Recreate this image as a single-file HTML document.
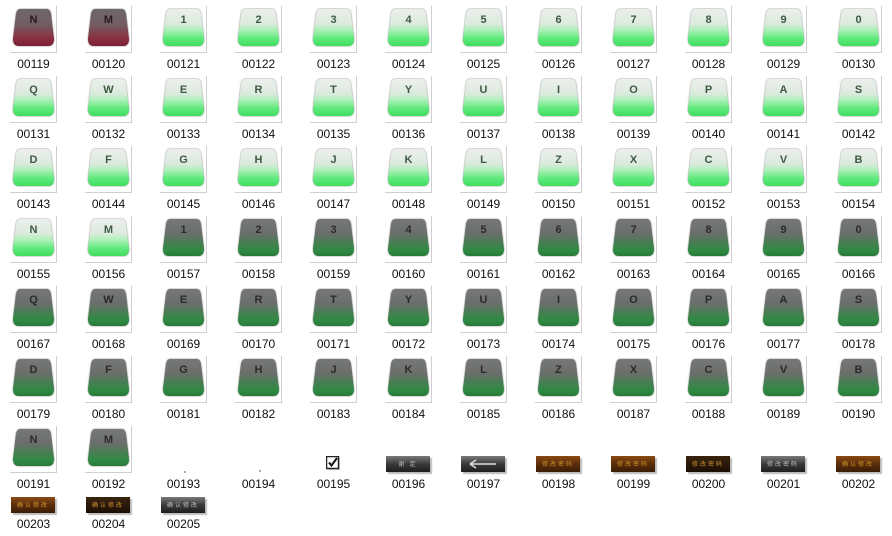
<!DOCTYPE html>
<html><head><meta charset="utf-8"><style>
*{margin:0;padding:0;box-sizing:border-box}
body{width:892px;height:536px;background:#fff;position:relative;overflow:hidden;font-family:"Liberation Sans",sans-serif}
.c{position:absolute;width:75px;height:70px}
.f{position:absolute;left:10px;top:6px;width:47px;height:47px;border-right:1px solid #cfcfcf;border-bottom:1px solid #cfcfcf}
.w{position:absolute;left:3px;top:3px;width:41px;height:37px;filter:drop-shadow(0 0 0.7px rgba(0,0,0,.6))}
.k{position:absolute;left:0;top:0;width:41px;height:37px;clip-path:path('M7 0 H34 Q37 0 38 5 L41 30 Q41 37 35 37 H6 Q0 37 0 30 L3 5 Q4 0 7 0 Z');font:bold 11px "Liberation Sans",sans-serif;text-align:center;padding-top:5px;color:#333}
.g{background:linear-gradient(#ecefec 0%,#dbeadd 40%,#b2f0bc 55%,#62ea7e 78%,#3fdd5e 100%);color:#3f5a44}
.r{background:linear-gradient(#6e6769 0%,#735b61 45%,#8a3042 78%,#7c2033 100%);color:#2a1a1e}
.d{background:linear-gradient(#767876 0%,#6a6e6b 40%,#4c7c56 60%,#2e8a42 85%,#297a39 100%);color:#2a2a2a}
.l{position:absolute;left:0;top:57px;width:67px;text-align:center;font-size:12px;color:#111}
.b{position:absolute;left:11px;width:44px;height:16px;box-shadow:2px 2px 1px #bbb;font:6px "Noto Sans CJK SC",sans-serif;color:#d09030;text-align:center;line-height:16px;letter-spacing:2px;overflow:hidden}
.gr{background:linear-gradient(#7a7a7a,#3a3a3a 50%,#1e1e1e);color:#bbb}
.br{background:linear-gradient(#8a4a14,#5a2e0a 50%,#3a1c06)}
.bk{background:linear-gradient(#3a2410,#1a0e04)}
</style></head><body>
<div class="c" style="left:0;top:0"><div class="f"><div class="w"><div class="k r">N</div></div></div><div class="l">00119</div></div>
<div class="c" style="left:75px;top:0"><div class="f"><div class="w"><div class="k r">M</div></div></div><div class="l">00120</div></div>
<div class="c" style="left:150px;top:0"><div class="f"><div class="w"><div class="k g">1</div></div></div><div class="l">00121</div></div>
<div class="c" style="left:225px;top:0"><div class="f"><div class="w"><div class="k g">2</div></div></div><div class="l">00122</div></div>
<div class="c" style="left:300px;top:0"><div class="f"><div class="w"><div class="k g">3</div></div></div><div class="l">00123</div></div>
<div class="c" style="left:375px;top:0"><div class="f"><div class="w"><div class="k g">4</div></div></div><div class="l">00124</div></div>
<div class="c" style="left:450px;top:0"><div class="f"><div class="w"><div class="k g">5</div></div></div><div class="l">00125</div></div>
<div class="c" style="left:525px;top:0"><div class="f"><div class="w"><div class="k g">6</div></div></div><div class="l">00126</div></div>
<div class="c" style="left:600px;top:0"><div class="f"><div class="w"><div class="k g">7</div></div></div><div class="l">00127</div></div>
<div class="c" style="left:675px;top:0"><div class="f"><div class="w"><div class="k g">8</div></div></div><div class="l">00128</div></div>
<div class="c" style="left:750px;top:0"><div class="f"><div class="w"><div class="k g">9</div></div></div><div class="l">00129</div></div>
<div class="c" style="left:825px;top:0"><div class="f"><div class="w"><div class="k g">0</div></div></div><div class="l">00130</div></div>
<div class="c" style="left:0;top:70px"><div class="f"><div class="w"><div class="k g">Q</div></div></div><div class="l">00131</div></div>
<div class="c" style="left:75px;top:70px"><div class="f"><div class="w"><div class="k g">W</div></div></div><div class="l">00132</div></div>
<div class="c" style="left:150px;top:70px"><div class="f"><div class="w"><div class="k g">E</div></div></div><div class="l">00133</div></div>
<div class="c" style="left:225px;top:70px"><div class="f"><div class="w"><div class="k g">R</div></div></div><div class="l">00134</div></div>
<div class="c" style="left:300px;top:70px"><div class="f"><div class="w"><div class="k g">T</div></div></div><div class="l">00135</div></div>
<div class="c" style="left:375px;top:70px"><div class="f"><div class="w"><div class="k g">Y</div></div></div><div class="l">00136</div></div>
<div class="c" style="left:450px;top:70px"><div class="f"><div class="w"><div class="k g">U</div></div></div><div class="l">00137</div></div>
<div class="c" style="left:525px;top:70px"><div class="f"><div class="w"><div class="k g">I</div></div></div><div class="l">00138</div></div>
<div class="c" style="left:600px;top:70px"><div class="f"><div class="w"><div class="k g">O</div></div></div><div class="l">00139</div></div>
<div class="c" style="left:675px;top:70px"><div class="f"><div class="w"><div class="k g">P</div></div></div><div class="l">00140</div></div>
<div class="c" style="left:750px;top:70px"><div class="f"><div class="w"><div class="k g">A</div></div></div><div class="l">00141</div></div>
<div class="c" style="left:825px;top:70px"><div class="f"><div class="w"><div class="k g">S</div></div></div><div class="l">00142</div></div>
<div class="c" style="left:0;top:140px"><div class="f"><div class="w"><div class="k g">D</div></div></div><div class="l">00143</div></div>
<div class="c" style="left:75px;top:140px"><div class="f"><div class="w"><div class="k g">F</div></div></div><div class="l">00144</div></div>
<div class="c" style="left:150px;top:140px"><div class="f"><div class="w"><div class="k g">G</div></div></div><div class="l">00145</div></div>
<div class="c" style="left:225px;top:140px"><div class="f"><div class="w"><div class="k g">H</div></div></div><div class="l">00146</div></div>
<div class="c" style="left:300px;top:140px"><div class="f"><div class="w"><div class="k g">J</div></div></div><div class="l">00147</div></div>
<div class="c" style="left:375px;top:140px"><div class="f"><div class="w"><div class="k g">K</div></div></div><div class="l">00148</div></div>
<div class="c" style="left:450px;top:140px"><div class="f"><div class="w"><div class="k g">L</div></div></div><div class="l">00149</div></div>
<div class="c" style="left:525px;top:140px"><div class="f"><div class="w"><div class="k g">Z</div></div></div><div class="l">00150</div></div>
<div class="c" style="left:600px;top:140px"><div class="f"><div class="w"><div class="k g">X</div></div></div><div class="l">00151</div></div>
<div class="c" style="left:675px;top:140px"><div class="f"><div class="w"><div class="k g">C</div></div></div><div class="l">00152</div></div>
<div class="c" style="left:750px;top:140px"><div class="f"><div class="w"><div class="k g">V</div></div></div><div class="l">00153</div></div>
<div class="c" style="left:825px;top:140px"><div class="f"><div class="w"><div class="k g">B</div></div></div><div class="l">00154</div></div>
<div class="c" style="left:0;top:210px"><div class="f"><div class="w"><div class="k g">N</div></div></div><div class="l">00155</div></div>
<div class="c" style="left:75px;top:210px"><div class="f"><div class="w"><div class="k g">M</div></div></div><div class="l">00156</div></div>
<div class="c" style="left:150px;top:210px"><div class="f"><div class="w"><div class="k d">1</div></div></div><div class="l">00157</div></div>
<div class="c" style="left:225px;top:210px"><div class="f"><div class="w"><div class="k d">2</div></div></div><div class="l">00158</div></div>
<div class="c" style="left:300px;top:210px"><div class="f"><div class="w"><div class="k d">3</div></div></div><div class="l">00159</div></div>
<div class="c" style="left:375px;top:210px"><div class="f"><div class="w"><div class="k d">4</div></div></div><div class="l">00160</div></div>
<div class="c" style="left:450px;top:210px"><div class="f"><div class="w"><div class="k d">5</div></div></div><div class="l">00161</div></div>
<div class="c" style="left:525px;top:210px"><div class="f"><div class="w"><div class="k d">6</div></div></div><div class="l">00162</div></div>
<div class="c" style="left:600px;top:210px"><div class="f"><div class="w"><div class="k d">7</div></div></div><div class="l">00163</div></div>
<div class="c" style="left:675px;top:210px"><div class="f"><div class="w"><div class="k d">8</div></div></div><div class="l">00164</div></div>
<div class="c" style="left:750px;top:210px"><div class="f"><div class="w"><div class="k d">9</div></div></div><div class="l">00165</div></div>
<div class="c" style="left:825px;top:210px"><div class="f"><div class="w"><div class="k d">0</div></div></div><div class="l">00166</div></div>
<div class="c" style="left:0;top:280px"><div class="f"><div class="w"><div class="k d">Q</div></div></div><div class="l">00167</div></div>
<div class="c" style="left:75px;top:280px"><div class="f"><div class="w"><div class="k d">W</div></div></div><div class="l">00168</div></div>
<div class="c" style="left:150px;top:280px"><div class="f"><div class="w"><div class="k d">E</div></div></div><div class="l">00169</div></div>
<div class="c" style="left:225px;top:280px"><div class="f"><div class="w"><div class="k d">R</div></div></div><div class="l">00170</div></div>
<div class="c" style="left:300px;top:280px"><div class="f"><div class="w"><div class="k d">T</div></div></div><div class="l">00171</div></div>
<div class="c" style="left:375px;top:280px"><div class="f"><div class="w"><div class="k d">Y</div></div></div><div class="l">00172</div></div>
<div class="c" style="left:450px;top:280px"><div class="f"><div class="w"><div class="k d">U</div></div></div><div class="l">00173</div></div>
<div class="c" style="left:525px;top:280px"><div class="f"><div class="w"><div class="k d">I</div></div></div><div class="l">00174</div></div>
<div class="c" style="left:600px;top:280px"><div class="f"><div class="w"><div class="k d">O</div></div></div><div class="l">00175</div></div>
<div class="c" style="left:675px;top:280px"><div class="f"><div class="w"><div class="k d">P</div></div></div><div class="l">00176</div></div>
<div class="c" style="left:750px;top:280px"><div class="f"><div class="w"><div class="k d">A</div></div></div><div class="l">00177</div></div>
<div class="c" style="left:825px;top:280px"><div class="f"><div class="w"><div class="k d">S</div></div></div><div class="l">00178</div></div>
<div class="c" style="left:0;top:350px"><div class="f"><div class="w"><div class="k d">D</div></div></div><div class="l">00179</div></div>
<div class="c" style="left:75px;top:350px"><div class="f"><div class="w"><div class="k d">F</div></div></div><div class="l">00180</div></div>
<div class="c" style="left:150px;top:350px"><div class="f"><div class="w"><div class="k d">G</div></div></div><div class="l">00181</div></div>
<div class="c" style="left:225px;top:350px"><div class="f"><div class="w"><div class="k d">H</div></div></div><div class="l">00182</div></div>
<div class="c" style="left:300px;top:350px"><div class="f"><div class="w"><div class="k d">J</div></div></div><div class="l">00183</div></div>
<div class="c" style="left:375px;top:350px"><div class="f"><div class="w"><div class="k d">K</div></div></div><div class="l">00184</div></div>
<div class="c" style="left:450px;top:350px"><div class="f"><div class="w"><div class="k d">L</div></div></div><div class="l">00185</div></div>
<div class="c" style="left:525px;top:350px"><div class="f"><div class="w"><div class="k d">Z</div></div></div><div class="l">00186</div></div>
<div class="c" style="left:600px;top:350px"><div class="f"><div class="w"><div class="k d">X</div></div></div><div class="l">00187</div></div>
<div class="c" style="left:675px;top:350px"><div class="f"><div class="w"><div class="k d">C</div></div></div><div class="l">00188</div></div>
<div class="c" style="left:750px;top:350px"><div class="f"><div class="w"><div class="k d">V</div></div></div><div class="l">00189</div></div>
<div class="c" style="left:825px;top:350px"><div class="f"><div class="w"><div class="k d">B</div></div></div><div class="l">00190</div></div>
<div class="c" style="left:0;top:420px"><div class="f"><div class="w"><div class="k d">N</div></div></div><div class="l">00191</div></div>
<div class="c" style="left:75px;top:420px"><div class="f"><div class="w"><div class="k d">M</div></div></div><div class="l">00192</div></div>
<div class="c" style="left:150px;top:420px"><div style="position:absolute;left:34px;top:51px;width:2px;height:2px;background:#aaa"></div><div class="l">00193</div></div>
<div class="c" style="left:225px;top:420px"><div style="position:absolute;left:34px;top:50px;width:2px;height:2px;background:#aaa"></div><div class="l">00194</div></div>
<div class="c" style="left:300px;top:420px"><svg style="position:absolute;left:26px;top:36px" width="15" height="15" viewBox="0 0 15 15"><rect x="0.5" y="0.5" width="12" height="12" fill="#fff" stroke="#222" stroke-width="1.5"/><path d="M3 6.5 L5.5 9.5 L11 2" fill="none" stroke="#111" stroke-width="2"/><path d="M2 13.5 H14 M13.5 2 V14" stroke="#aaa"/></svg><div class="l">00195</div></div>
<div class="c" style="left:375px;top:420px"><div class="b gr" style="top:36px">谢 定</div><div class="l">00196</div></div>
<div class="c" style="left:450px;top:420px"><div class="b gr" style="top:36px"><svg width="30" height="10" viewBox="0 0 30 10" style="margin-top:3px"><path d="M2 5 H28 M2 5 L8 1 M2 5 L8 9" stroke="#ddd" stroke-width="1.5" fill="none"/></svg></div><div class="l">00197</div></div>
<div class="c" style="left:525px;top:420px"><div class="b br" style="top:36px">修改密码</div><div class="l">00198</div></div>
<div class="c" style="left:600px;top:420px"><div class="b br" style="top:36px">修改密码</div><div class="l">00199</div></div>
<div class="c" style="left:675px;top:420px"><div class="b bk" style="top:36px">修改密码</div><div class="l">00200</div></div>
<div class="c" style="left:750px;top:420px"><div class="b gr" style="top:36px">修改密码</div><div class="l">00201</div></div>
<div class="c" style="left:825px;top:420px"><div class="b br" style="top:36px">确认修改</div><div class="l">00202</div></div>
<div class="c" style="left:0;top:460px"><div class="b br" style="top:37px">确认修改</div><div class="l">00203</div></div>
<div class="c" style="left:75px;top:460px"><div class="b bk" style="top:37px">确认修改</div><div class="l">00204</div></div>
<div class="c" style="left:150px;top:460px"><div class="b gr" style="top:37px">确认修改</div><div class="l">00205</div></div>
</body></html>
